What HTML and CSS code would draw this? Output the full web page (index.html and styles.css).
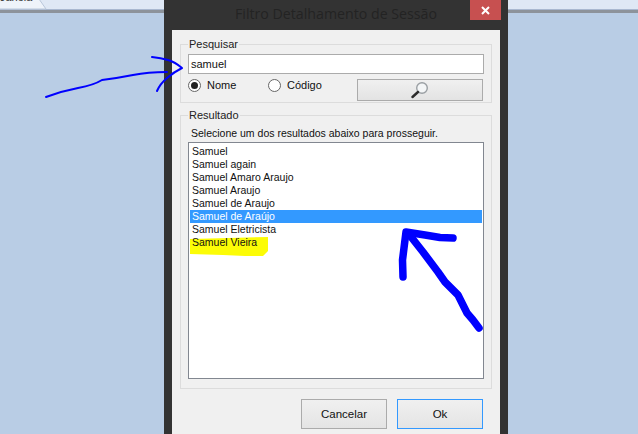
FILE: index.html
```html
<!DOCTYPE html>
<html lang="pt">
<head>
<meta charset="utf-8">
<title>Filtro Detalhamento de Sessão</title>
<link rel="stylesheet" href="styles.css">
</head>
<body>
<div class="desktop">
  <div class="appbar">
    <svg class="apptab" width="50" height="10" viewBox="0 0 50 10"><path d="M-1 -1H39L46 9H-1Z" fill="#eef3fa" stroke="#b9c6da"/></svg>
    <span class="tabtext">Janela</span>
  </div>
  <div class="window">
    <div class="titlebar">
      <span class="title">Filtro Detalhamento de Sessão</span>
      <button class="close" aria-label="Fechar"><svg width="9" height="9" viewBox="0 0 9 9"><path d="M1 1L8 8M8 1L1 8" stroke="#fff" stroke-width="2"/></svg></button>
    </div>
    <div class="client">
      <fieldset class="group search">
        <legend>Pesquisar</legend>
        <div class="textbox">samuel</div>
        <div class="options">
          <span class="radio checked"></span><span class="opt-name">Nome</span>
          <span class="radio"></span><span class="opt-code">Código</span>
          <button class="searchbtn" aria-label="Pesquisar">
            <svg width="18" height="18" viewBox="0 0 18 18"><circle cx="11" cy="7" r="5.3" fill="#f4f6f7" stroke="#9a9fa3" stroke-width="1.4"/><path d="M7 11L1.5 16" stroke="#2b2b2b" stroke-width="2.4" stroke-linecap="round"/></svg>
          </button>
        </div>
      </fieldset>
      <fieldset class="group result">
        <legend>Resultado</legend>
        <div class="hint">Selecione um dos resultados abaixo para prosseguir.</div>
        <div class="list">
          <svg class="marker" width="80" height="20" viewBox="0 0 80 20"><path d="M1 2L40 1L79 0L79 14L74 19L56 19L34 18L1 17Z" fill="#fcfc06"/></svg>
          <div class="item">Samuel</div>
          <div class="item">Samuel again</div>
          <div class="item">Samuel Amaro Araujo</div>
          <div class="item">Samuel Araujo</div>
          <div class="item">Samuel de Araujo</div>
          <div class="item selected">Samuel de Araújo</div>
          <div class="item">Samuel Eletricista</div>
          <div class="item">Samuel Vieira</div>
        </div>
      </fieldset>
      <div class="actions">
        <button class="btn">Cancelar</button>
        <button class="btn default">Ok</button>
      </div>
    </div>
  </div>
  <svg class="ink" width="638" height="434" viewBox="0 0 638 434" fill="none" stroke="#0000ff" stroke-linecap="round" stroke-linejoin="round">
    <path stroke-width="2" d="M46 97Q62 91 78 88T102 80Q118 78 133 75T167 72"/>
    <path stroke-width="2" d="M152 57Q161 58 168 60T182 68Q174 72 167 78T157 91"/>
    <path stroke-width="7.5" d="M403 277L402.5 260L406 232L425 235L440 237.500L453 238"/>
    <path stroke-width="7.5" d="M408 233L423 252L438 272L445 282L458 295L467 313L473 320L479 328"/>
  </svg>
</div>
</body>
</html>
```
FILE: styles.css
```css
* { box-sizing: border-box; }
html, body { margin: 0; padding: 0; }
body { width: 638px; height: 434px; overflow: hidden; font-family: "Liberation Sans", Arial, sans-serif; font-size: 10.5px; color: #111; }
.desktop { position: relative; width: 638px; height: 434px; background: #b9cde5; overflow: hidden; }
.appbar { position: relative; height: 13px; background: #dfe8f5; border-bottom: 3px solid #8d939b; box-shadow: inset 0 -1px 0 #a9b8d0; overflow: hidden; }
.apptab { display: block; }
.tabtext { position: absolute; left: 0; top: -9px; font-size: 11px; color: #333; }
.window { position: absolute; left: 164px; top: 0; width: 344px; height: 434px; background: #333333; padding: 0 8px; display: flex; flex-direction: column; }
.titlebar { height: 30px; position: relative; display: flex; justify-content: center; padding-top: 5px; flex: none; }
.title { font-family: "Open Sans", sans-serif; font-size: 14.2px; line-height: 18px; color: #232323; white-space: nowrap; }
.close { position: absolute; right: -1px; top: 0; width: 31px; height: 20px; background: #c75050; border: 0; padding: 0; display: flex; align-items: center; justify-content: center; }
.client { flex: 1; background: #f0f0f0; padding: 8px 8px 0; display: flex; flex-direction: column; }
.group { margin: 0; border: 1px solid #dcdcdc; padding: 0 7px; min-width: 0; }
.group legend { padding: 0 1px; line-height: 13px; font-size: 11px; color: #222; }
.search { height: 65px; }
.textbox { height: 20px; width: 296px; margin-top: 3px; background: #fff; border: 1px solid #ababab; padding: 0 2px; line-height: 18px; font-size: 11px; }
.options { display: flex; align-items: flex-start; height: 22px; margin-top: 5px; width: 295px; }
.radio { width: 13px; height: 13px; border-radius: 50%; border: 1px solid #666; background: #fff; flex: none; position: relative; }
.radio.checked::after { content: ""; position: absolute; left: 2px; top: 2px; width: 7px; height: 7px; border-radius: 50%; background: #222; }
.opt-name { margin-left: 6px; width: 61px; line-height: 13px; font-size: 11px; }
.opt-code { margin-left: 6px; line-height: 13px; font-size: 11px; }
.searchbtn { margin-left: auto; width: 126px; height: 22px; border: 1px solid #ababab; background: linear-gradient(#f0f0f0, #e3e3e3); padding: 0; display: flex; align-items: center; justify-content: center; }
.result { margin-top: 6px; height: 280px; }
.hint { margin-top: 5px; padding-left: 3px; line-height: 13px; }
.list { position: relative; margin-top: 2px; width: 296px; height: 237px; background: #fff; border: 1px solid #828790; padding: 2px 1px; }
.item { position: relative; height: 13px; line-height: 13px; padding-left: 2px; white-space: nowrap; }
.selected { background: #3399ff; color: #fff; }
.marker { position: absolute; left: 0; top: 94px; }
.actions { display: flex; justify-content: flex-end; gap: 10px; margin-top: 10px; padding-right: 9px; }
.btn { width: 86px; height: 30px; border: 1px solid #ababab; background: linear-gradient(#f0f0f0, #e4e4e4); font: inherit; font-size: 11.5px; color: #111; padding: 0; }
.btn.default { border-color: #3399ff; }
.ink { position: absolute; left: 0; top: 0; pointer-events: none; }
```
